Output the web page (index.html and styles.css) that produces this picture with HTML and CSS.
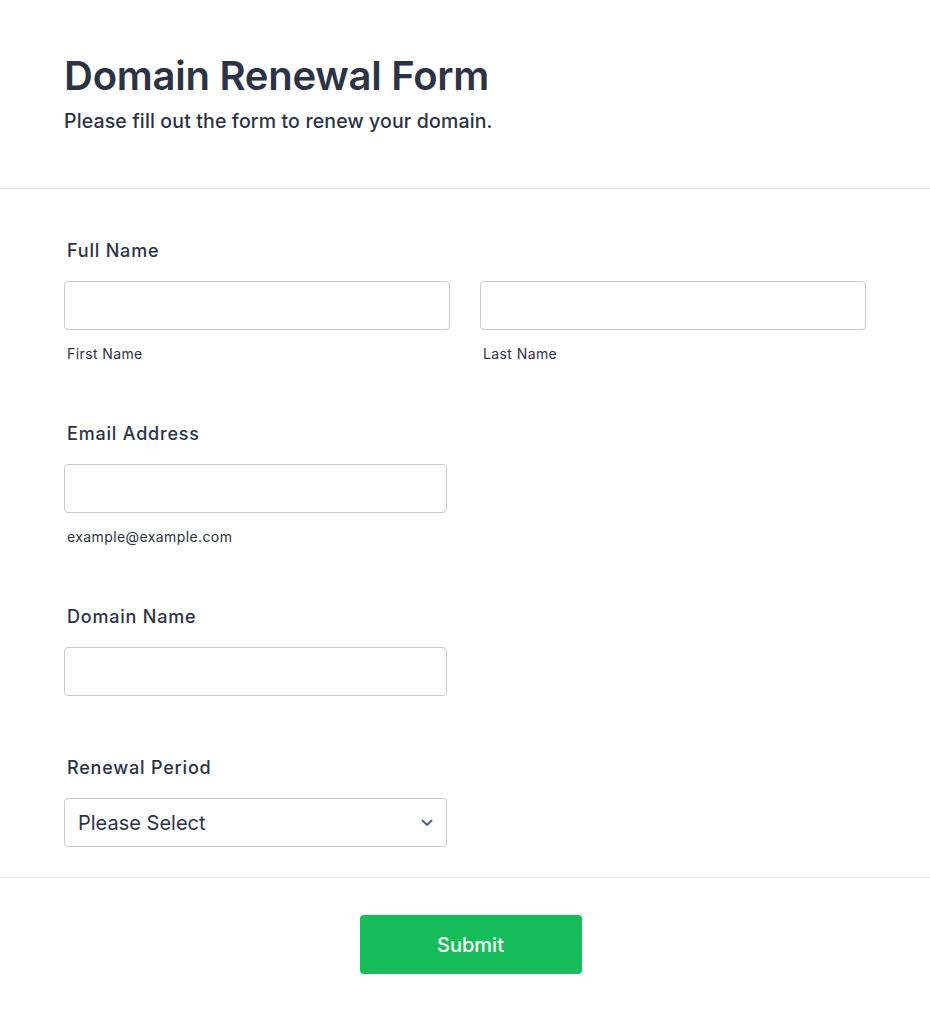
FILE: index.html
```html
<!DOCTYPE html>
<html lang="en">
<head>
<meta charset="utf-8">
<title>Domain Renewal Form</title>
<link rel="stylesheet" href="styles.css">
</head>
<body>
<div class="form">
  <header class="form-header">
    <h1 class="title">Domain Renewal Form</h1>
    <p class="subtitle">Please fill out the form to renew your domain.</p>
  </header>
  <section class="form-body">
    <div class="field field-name">
      <label class="label">Full Name</label>
      <div class="name-row">
        <div class="name-col">
          <input class="input" type="text">
          <span class="sublabel">First Name</span>
        </div>
        <div class="name-col">
          <input class="input" type="text">
          <span class="sublabel">Last Name</span>
        </div>
      </div>
    </div>
    <div class="field field-email">
      <label class="label">Email Address</label>
      <input class="input input-half" type="text">
      <span class="sublabel">example@example.com</span>
    </div>
    <div class="field field-domain">
      <label class="label">Domain Name</label>
      <input class="input input-half" type="text">
    </div>
    <div class="field field-period">
      <label class="label">Renewal Period</label>
      <div class="select input-half">
        <span class="select-text">Please Select</span>
        <svg class="chevron" width="12" height="8" viewBox="0 0 12 8"><path d="M1.5 1.5 L6 6 L10.5 1.5" fill="none" stroke="#57647e" stroke-width="2" stroke-linecap="round" stroke-linejoin="round"/></svg>
      </div>
    </div>
  </section>
  <footer class="form-footer">
    <button class="submit" type="button">Submit</button>
  </footer>
</div>
</body>
</html>
```
FILE: styles.css
```css
* { box-sizing: border-box; }
html, body { margin: 0; padding: 0; background: #fff; }
body {
  font-family: Inter, "Noto Sans", sans-serif;
  color: #2c3345;
}
.form-header {
  padding: 52px 64px 53px;
  border-bottom: 1px solid #d8dde8;
}
.title {
  margin: 0;
  font-size: 40px;
  line-height: 48px;
  font-weight: 600;
  letter-spacing: -0.25px;
}
.subtitle {
  margin: 8px 0 0;
  font-size: 19.5px;
  line-height: 27px;
  font-weight: 450;
  letter-spacing: 0.14px;
}
.form-body {
  padding: 48px 64px 30px;
  border-bottom: 1px solid #e6e7ee;
}
.field { display: flex; flex-direction: column; }
.label {
  display: block;
  font-size: 18px;
  line-height: 27px;
  font-weight: 500;
  letter-spacing: 0.8px;
  padding-left: 3px;
  margin-bottom: 17px;
}
.name-row { display: flex; gap: 30px; }
.name-col { flex: 1; display: flex; flex-direction: column; }
.input {
  display: block;
  width: 100%;
  height: 49px;
  border: 1px solid #c3cad8;
  border-radius: 4px;
  background: #fff;
  margin: 0;
  padding: 0 12px;
  font: inherit;
}
.input-half { width: 383px; }
.sublabel {
  display: block;
  font-size: 14px;
  line-height: 20px;
  letter-spacing: 0.4px;
  padding-left: 3px;
  margin-top: 14px;
  color: #2c3345;
}
.field-name { margin-bottom: 56px; }
.field-email { margin-bottom: 56px; }
.field-domain { margin-bottom: 58px; }
.select {
  height: 49px;
  border: 1px solid #c3cad8;
  border-radius: 4px;
  display: flex;
  align-items: center;
  justify-content: space-between;
  padding: 0 13px 0 13px;
}
.select-text {
  font-size: 20px;
  line-height: 24px;
  color: #2c3345;
}
.chevron { display: block; }
.form-footer {
  display: flex;
  justify-content: center;
  padding: 37px 0 50px;
}
.submit {
  width: 222px;
  height: 59px;
  border: 0;
  border-radius: 4px;
  background: #18bd5b;
  color: #fff;
  font-family: Inter, "Noto Sans", sans-serif;
  font-size: 20px;
  font-weight: 500;
  margin-left: 11px;
}
```
